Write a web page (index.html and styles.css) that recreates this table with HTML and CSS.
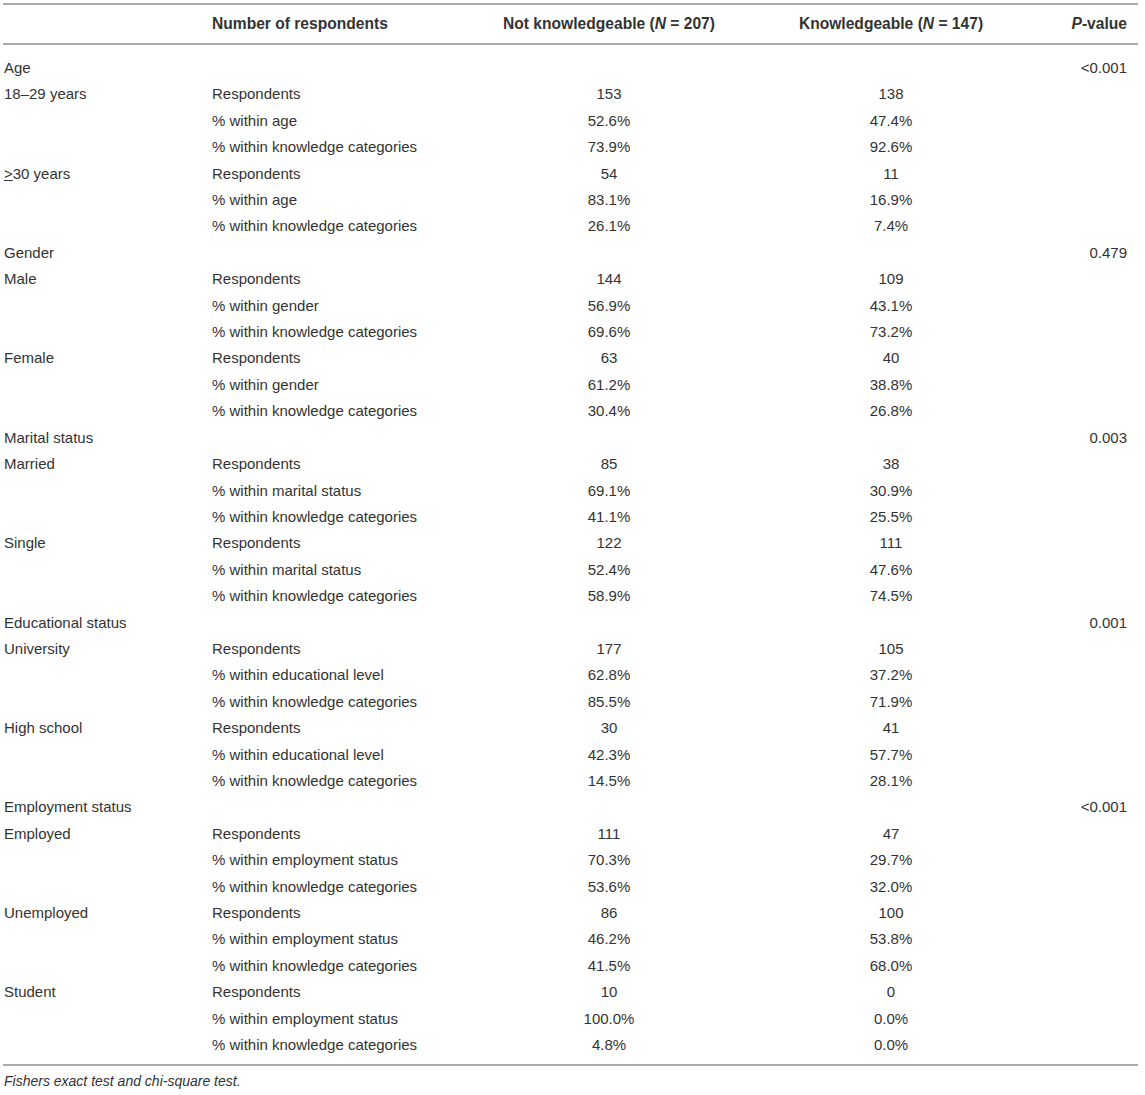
FILE: index.html
```html
<!DOCTYPE html>
<html>
<head>
<meta charset="utf-8">
<link rel="stylesheet" href="styles.css">
</head>
<body>
<div class="wrap">
<table class="tbl">
<colgroup>
<col class="c1"><col class="c2"><col class="c3"><col class="c4"><col class="c5">
</colgroup>
<thead>
<tr>
<th class="l"></th>
<th class="l">Number of respondents</th>
<th>Not knowledgeable (<i>N</i> = 207)</th>
<th>Knowledgeable (<i>N</i> = 147)</th>
<th class="r"><i>P</i>-value</th>
</tr>
</thead>
<tbody>
<tr class="first"><td>Age</td><td></td><td></td><td></td><td class="r">&lt;0.001</td></tr>
<tr><td>18–29 years</td><td>Respondents</td><td class="c">153</td><td class="c">138</td><td></td></tr>
<tr><td></td><td>% within age</td><td class="c">52.6%</td><td class="c">47.4%</td><td></td></tr>
<tr><td></td><td>% within knowledge categories</td><td class="c">73.9%</td><td class="c">92.6%</td><td></td></tr>
<tr><td><u>&gt;</u>30 years</td><td>Respondents</td><td class="c">54</td><td class="c">11</td><td></td></tr>
<tr><td></td><td>% within age</td><td class="c">83.1%</td><td class="c">16.9%</td><td></td></tr>
<tr><td></td><td>% within knowledge categories</td><td class="c">26.1%</td><td class="c">7.4%</td><td></td></tr>
<tr><td>Gender</td><td></td><td></td><td></td><td class="r">0.479</td></tr>
<tr><td>Male</td><td>Respondents</td><td class="c">144</td><td class="c">109</td><td></td></tr>
<tr><td></td><td>% within gender</td><td class="c">56.9%</td><td class="c">43.1%</td><td></td></tr>
<tr><td></td><td>% within knowledge categories</td><td class="c">69.6%</td><td class="c">73.2%</td><td></td></tr>
<tr><td>Female</td><td>Respondents</td><td class="c">63</td><td class="c">40</td><td></td></tr>
<tr><td></td><td>% within gender</td><td class="c">61.2%</td><td class="c">38.8%</td><td></td></tr>
<tr><td></td><td>% within knowledge categories</td><td class="c">30.4%</td><td class="c">26.8%</td><td></td></tr>
<tr><td>Marital status</td><td></td><td></td><td></td><td class="r">0.003</td></tr>
<tr><td>Married</td><td>Respondents</td><td class="c">85</td><td class="c">38</td><td></td></tr>
<tr><td></td><td>% within marital status</td><td class="c">69.1%</td><td class="c">30.9%</td><td></td></tr>
<tr><td></td><td>% within knowledge categories</td><td class="c">41.1%</td><td class="c">25.5%</td><td></td></tr>
<tr><td>Single</td><td>Respondents</td><td class="c">122</td><td class="c">111</td><td></td></tr>
<tr><td></td><td>% within marital status</td><td class="c">52.4%</td><td class="c">47.6%</td><td></td></tr>
<tr><td></td><td>% within knowledge categories</td><td class="c">58.9%</td><td class="c">74.5%</td><td></td></tr>
<tr><td>Educational status</td><td></td><td></td><td></td><td class="r">0.001</td></tr>
<tr><td>University</td><td>Respondents</td><td class="c">177</td><td class="c">105</td><td></td></tr>
<tr><td></td><td>% within educational level</td><td class="c">62.8%</td><td class="c">37.2%</td><td></td></tr>
<tr><td></td><td>% within knowledge categories</td><td class="c">85.5%</td><td class="c">71.9%</td><td></td></tr>
<tr><td>High school</td><td>Respondents</td><td class="c">30</td><td class="c">41</td><td></td></tr>
<tr><td></td><td>% within educational level</td><td class="c">42.3%</td><td class="c">57.7%</td><td></td></tr>
<tr><td></td><td>% within knowledge categories</td><td class="c">14.5%</td><td class="c">28.1%</td><td></td></tr>
<tr><td>Employment status</td><td></td><td></td><td></td><td class="r">&lt;0.001</td></tr>
<tr><td>Employed</td><td>Respondents</td><td class="c">111</td><td class="c">47</td><td></td></tr>
<tr><td></td><td>% within employment status</td><td class="c">70.3%</td><td class="c">29.7%</td><td></td></tr>
<tr><td></td><td>% within knowledge categories</td><td class="c">53.6%</td><td class="c">32.0%</td><td></td></tr>
<tr><td>Unemployed</td><td>Respondents</td><td class="c">86</td><td class="c">100</td><td></td></tr>
<tr><td></td><td>% within employment status</td><td class="c">46.2%</td><td class="c">53.8%</td><td></td></tr>
<tr><td></td><td>% within knowledge categories</td><td class="c">41.5%</td><td class="c">68.0%</td><td></td></tr>
<tr><td>Student</td><td>Respondents</td><td class="c">10</td><td class="c">0</td><td></td></tr>
<tr><td></td><td>% within employment status</td><td class="c">100.0%</td><td class="c">0.0%</td><td></td></tr>
<tr class="last"><td></td><td>% within knowledge categories</td><td class="c">4.8%</td><td class="c">0.0%</td><td></td></tr>
</tbody>
</table>
<p class="note">Fishers exact test and chi-square test.</p>
</div>
</body>
</html>
```
FILE: styles.css
```css
html, body {
  margin: 0;
  padding: 0;
  background: #fff;
}
body {
  font-family: "Liberation Sans", Arial, Helvetica, sans-serif;
  font-size: 15px;
  color: #333;
}
.wrap {
  padding: 3px 0 0 3px;
  width: 1135px;
}
.tbl {
  width: 1135px;
  border-collapse: collapse;
  table-layout: fixed;
  border-top: 2px solid #aaa;
  border-bottom: 2px solid #aaa;
}
.c1 { width: 208px; }
.c2 { width: 269px; }
.c3 { width: 258px; }
.c4 { width: 306px; }
.c5 { width: 94px; }
.tbl thead tr {
  border-bottom: 2px solid #aaa;
}
.tbl th {
  font-weight: bold;
  font-size: 15.6px;
  text-align: center;
  height: 38px;
  padding: 0 1px;
  line-height: 18px;
  vertical-align: middle;
}
.tbl th.l { text-align: left; }
.tbl th.r, .tbl td.r { text-align: right; padding-right: 11px; }
.tbl td {
  padding: 4px 1px;
  line-height: 18.4px;
  text-align: left;
  white-space: nowrap;
}
.tbl td.c { text-align: center; }
.tbl tr.first td { padding-top: 14px; }
.tbl tr.last td { padding-bottom: 10px; }
.note {
  margin: 6px 0 0 1px;
  font-style: italic;
  font-size: 14px;
  line-height: 18px;
}
```
